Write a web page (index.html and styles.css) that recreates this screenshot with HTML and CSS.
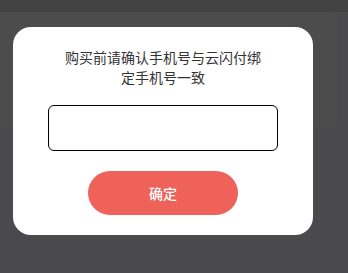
FILE: index.html
```html
<!DOCTYPE html>
<html lang="zh-CN">
  <head>
    <meta charset="UTF-8" />
    <meta name="viewport" content="width=device-width, initial-scale=1.0" />
    <title>确认手机号</title>
    <link rel="stylesheet" href="styles.css">
  </head>
  <body>
    <div class="page">
      <div class="page-top"></div>
      <div class="page-card"></div>
    </div>

    <div class="mask">
      <div class="dialog">
        <p class="dialog-text">购买前请确认手机号与云闪付绑定手机号一致</p>
        <input class="phone-input" type="tel" />
        <button class="confirm-btn">确定</button>
      </div>
    </div>
  </body>
</html>
```

FILE: styles.css
```css
body {
  margin: 0;
  font-family: "Noto Sans CJK SC", "Noto Sans", sans-serif;
  background-color: #f7f5fc;
}

.page-top {
  height: 12px;
  background-color: #dcdcdc;
}

.page-card {
  width: 337px;
  height: 116px;
  background-color: #fff;
  border-radius: 0 8px 8px 0;
}

.mask {
  position: fixed;
  top: 0;
  left: 0;
  right: 0;
  bottom: 0;
  background-color: rgba(0, 0, 0, 0.7);
}

.dialog {
  width: 300px;
  margin: 27px 0 0 13px;
  padding: 20px 0;
  box-sizing: border-box;
  background-color: #fff;
  border-radius: 18px;
  display: flex;
  flex-direction: column;
  align-items: center;
}

.dialog-text {
  width: 200px;
  margin: 0;
  font-size: 14px;
  line-height: 20px;
  color: #333;
  text-align: center;
}

.phone-input {
  width: 230px;
  height: 46px;
  margin-top: 18px;
  box-sizing: border-box;
  border: 1px solid #000;
  border-radius: 6px;
  outline: none;
}

.confirm-btn {
  width: 150px;
  height: 44px;
  margin-top: 20px;
  border: none;
  border-radius: 22px;
  background-color: #ee625a;
  color: #fff;
  font-family: inherit;
  font-size: 14px;
  font-weight: 500;
}
```
